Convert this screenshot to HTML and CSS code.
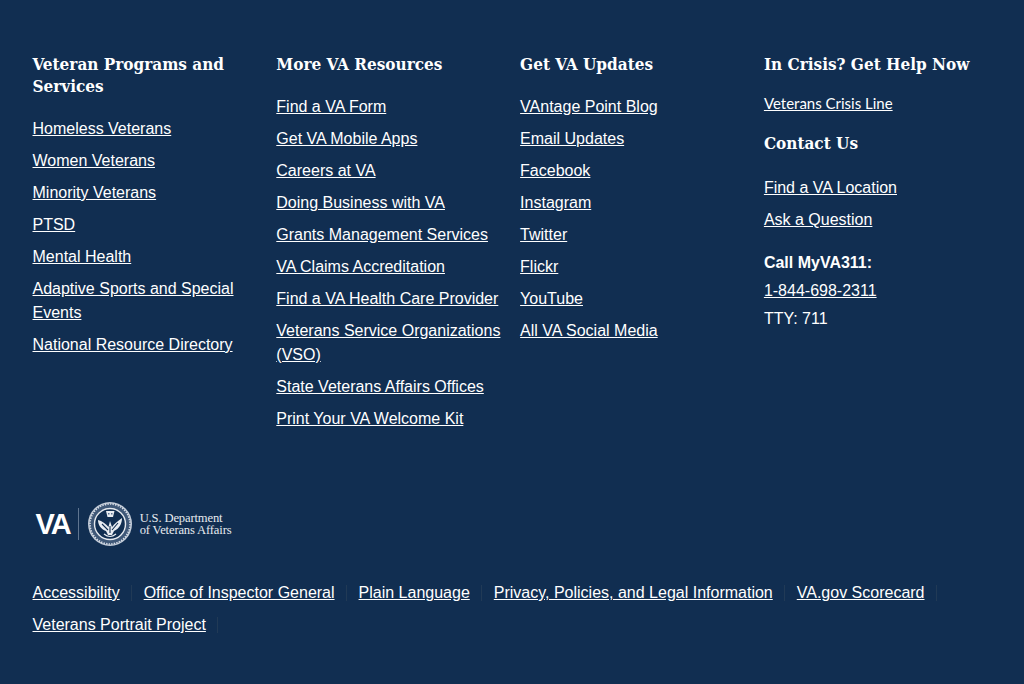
FILE: index.html
```html
<!DOCTYPE html>
<html lang="en">
<head>
  <meta charset="UTF-8">
  <meta name="viewport" content="width=device-width, initial-scale=1.0">
  <title>VA Footer</title>
  <link rel="stylesheet" href="styles.css">
</head>
<body>

  <footer class="footer">
    <div class="columns">
      <div class="column">
        <h2>Veteran Programs and Services</h2>
        <ul class="links">
          <li><a href="#">Homeless Veterans</a></li>
          <li><a href="#">Women Veterans</a></li>
          <li><a href="#">Minority Veterans</a></li>
          <li><a href="#">PTSD</a></li>
          <li><a href="#">Mental Health</a></li>
          <li><a href="#">Adaptive Sports and Special Events</a></li>
          <li><a href="#">National Resource Directory</a></li>
        </ul>
      </div>

      <div class="column">
        <h2>More VA Resources</h2>
        <ul class="links">
          <li><a href="#">Find a VA Form</a></li>
          <li><a href="#">Get VA Mobile Apps</a></li>
          <li><a href="#">Careers at VA</a></li>
          <li><a href="#">Doing Business with VA</a></li>
          <li><a href="#">Grants Management Services</a></li>
          <li><a href="#">VA Claims Accreditation</a></li>
          <li><a href="#">Find a VA Health Care Provider</a></li>
          <li><a href="#">Veterans Service Organizations (VSO)</a></li>
          <li><a href="#">State Veterans Affairs Offices</a></li>
          <li><a href="#">Print Your VA Welcome Kit</a></li>
        </ul>
      </div>

      <div class="column">
        <h2>Get VA Updates</h2>
        <ul class="links">
          <li><a href="#">VAntage Point Blog</a></li>
          <li><a href="#">Email Updates</a></li>
          <li><a href="#">Facebook</a></li>
          <li><a href="#">Instagram</a></li>
          <li><a href="#">Twitter</a></li>
          <li><a href="#">Flickr</a></li>
          <li><a href="#">YouTube</a></li>
          <li><a href="#">All VA Social Media</a></li>
        </ul>
      </div>

      <div class="column">
        <h2>In Crisis? Get Help Now</h2>
        <a href="#" class="crisis-link">Veterans Crisis Line</a>
        <h2 class="contact-title">Contact Us</h2>
        <ul class="links">
          <li><a href="#">Find a VA Location</a></li>
          <li><a href="#">Ask a Question</a></li>
        </ul>
        <div class="call">
          <strong>Call MyVA311:</strong>
          <a href="#">1-844-698-2311</a>
          <span>TTY: 711</span>
        </div>
      </div>
    </div>

    <div class="logo">
      <span class="logo-va">VA</span>
      <span class="logo-rule"></span>
      <svg class="seal" width="46" height="46" viewBox="0 0 46 46">
        <circle cx="23" cy="23" r="22" fill="#c3ccd8"/>
        <circle cx="23" cy="23" r="20.5" fill="#3f5878"/>
        <circle cx="23" cy="23" r="20" fill="none" stroke="#d5dbe4" stroke-width="1.6" stroke-dasharray="1.4 1.2"/>
        <circle cx="23" cy="23" r="15.5" fill="#112e51" stroke="#e6eaef" stroke-width="1.4"/>
        <!-- flag shield above the eagle -->
        <path d="M19 10 h8.5 l-1.5 6 h-5.5 Z" fill="#e8ecf1"/>
        <path d="M21 12 h1.5 v1.5 h-1.5 Z M24 12 h1.5 v1.5 h-1.5 Z" fill="#5a7090"/>
        <!-- eagle wings and body -->
        <path d="M11 19 C15 20 19 23 21.5 26 L23 20 L25 26 C27 23 31 20 35 17 C35 23 32 28 27 30 L25 34 L21 34 L19 30 C14 28 11 24 11 19 Z" fill="#e8ecf1"/>
        <path d="M15 23 L21 29 M31 22 L25 29 M23 25 v7" stroke="#112e51" stroke-width="1.1" fill="none"/>
        <path d="M17 33 Q23 38 29 33" stroke="#e8ecf1" stroke-width="1.2" fill="none"/>
      </svg>
      <span class="logo-text">
        <span>U.S. Department</span>
        <span>of Veterans Affairs</span>
      </span>
    </div>

    <ul class="bottom-links">
      <li><a href="#">Accessibility</a></li>
      <li><a href="#">Office of Inspector General</a></li>
      <li><a href="#">Plain Language</a></li>
      <li><a href="#">Privacy, Policies, and Legal Information</a></li>
      <li><a href="#">VA.gov Scorecard</a></li>
      <li><a href="#">Veterans Portrait Project</a></li>
    </ul>
  </footer>

</body>
</html>
```

FILE: styles.css
```css
body {
  margin: 0;
  background-color: #112e51;
  color: #fff;
  font-family: "Liberation Sans", Arial, sans-serif;
  font-size: 16px;
  line-height: 24px;
}

a {
  color: #fff;
}

.footer {
  height: 684px;
  box-sizing: border-box;
  padding: 52px 16px 0 32.5px;
  overflow: hidden;
}

.columns {
  display: grid;
  grid-template-columns: repeat(4, 243.8px);
  height: 448px;
}

.column {
  padding-right: 16px;
}

h2 {
  margin: 0 0 20px;
  padding-top: 1px;
  font-family: "DejaVu Serif", serif;
  font-size: 17px;
  font-stretch: condensed;
  font-weight: 700;
  line-height: 22px;
}

.links {
  list-style: none;
  margin: 0;
  padding: 0;
}

.links li {
  margin-bottom: 8px;
}

.crisis-link {
  display: block;
  margin-top: -2px;
  font-family: "Lato", sans-serif;
  font-size: 15px;
  line-height: 20px;
}

h2.contact-title {
  margin-top: 18px;
  margin-bottom: 22px;
}

.call {
  display: flex;
  flex-direction: column;
  gap: 4px;
  margin-top: 19px;
}

.logo {
  display: flex;
  align-items: center;
  height: 48px;
  padding-left: 3px;
}

.logo-va {
  font-size: 29px;
  font-weight: 700;
  letter-spacing: -2px;
  line-height: 32px;
}

.logo-rule {
  width: 1px;
  height: 32px;
  margin: 0 8px;
  background-color: #5f7590;
}

.logo-text {
  display: flex;
  flex-direction: column;
  margin-left: 7px;
  color: #e6eaef;
  font-family: "Liberation Serif", serif;
  font-size: 12.6px;
  letter-spacing: -0.15px;
  line-height: 12px;
}

.bottom-links {
  display: flex;
  flex-wrap: wrap;
  list-style: none;
  margin: 33px 0 0;
  padding: 0;
}

.bottom-links li {
  position: relative;
  margin: 0 24px 8px 0;
}

/* faint divider after each link */
.bottom-links li::after {
  content: "";
  position: absolute;
  top: 4px;
  right: -12px;
  width: 1px;
  height: 16px;
  background-color: #213a56;
}
```
